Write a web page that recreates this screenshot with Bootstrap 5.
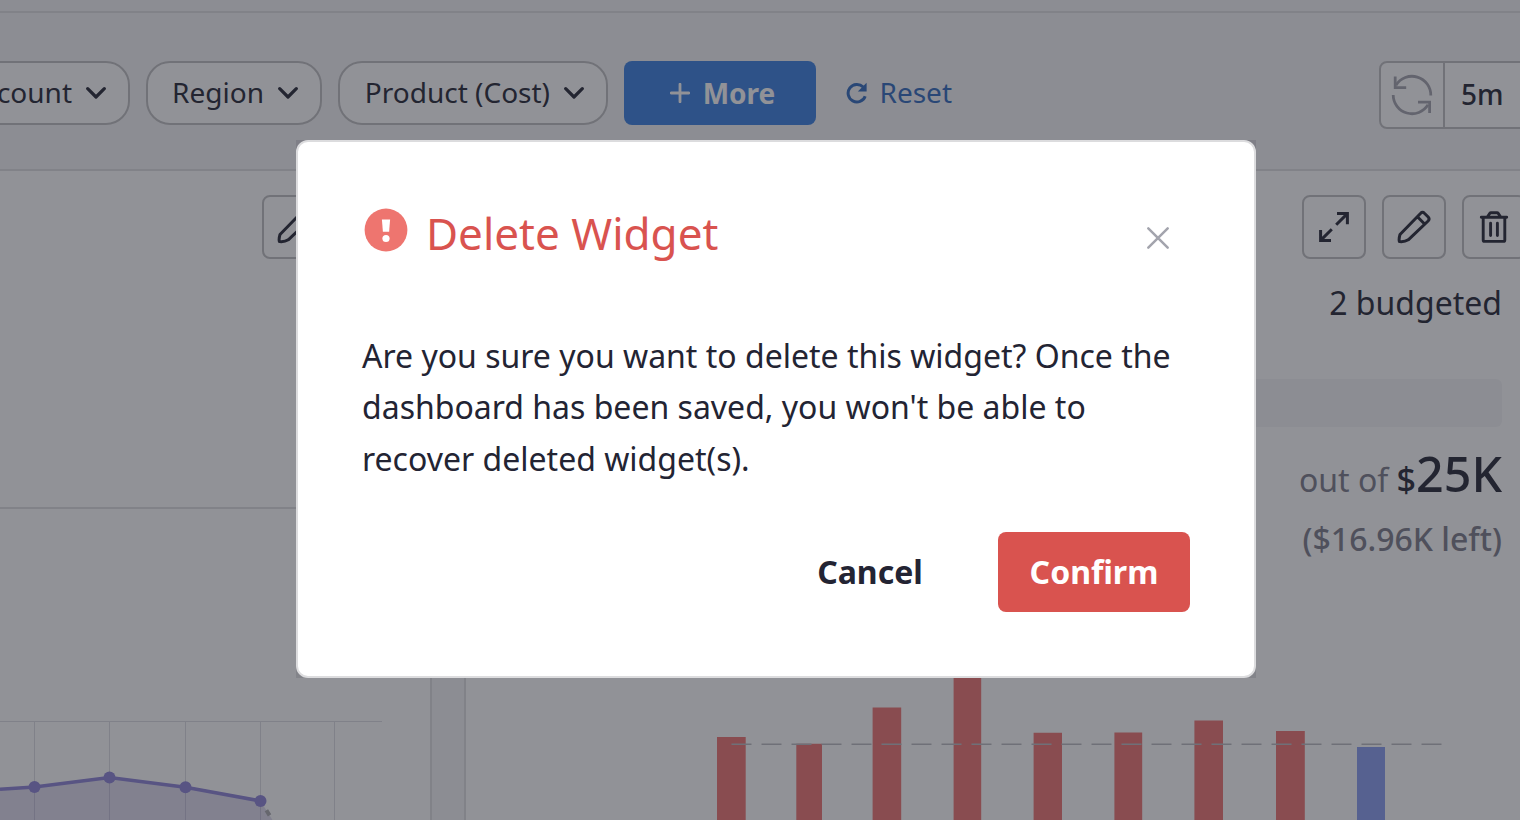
<!DOCTYPE html>
<html lang="en">
<head>
<meta charset="utf-8">
<meta name="viewport" content="width=device-width, initial-scale=1">
<title>Delete Widget</title>
<link href="https://cdn.jsdelivr.net/npm/bootstrap@5.3.0/dist/css/bootstrap.min.css" rel="stylesheet">
<style>
  :root { --ink: #232433; --rule: #dfdfe0; --edge: #bfbfc1; --tint: #f5f5f6; }
  body { font-family: "Noto Sans", sans-serif; color: var(--ink); background: #fff; }
  svg { display: block; flex: none; fill: none; stroke: currentColor; }
  .page { width: 1520px; height: 820px; }
  .topstrip { flex: none; height: 13px; background: var(--tint); border-bottom: 2px solid var(--rule); }
  .toolbar { flex: none; height: 158px; padding-top: 48px; background: var(--tint); border-bottom: 2px solid var(--rule); }
  .pill { height: 64px; border: 2px solid var(--edge); border-radius: 24px; background: #fff; font-size: 28px; color: var(--ink); padding: 0 22px 2px 24px; gap: 14px; }
  .pill svg { margin-top: 2px; }
  .pill-first { width: 190px; margin-left: -60px; }
  .pill-region { width: 176px; }
  .pill-product { width: 270px; }
  .btn-more { width: 192px; height: 64px; border-radius: 8px; background: #387fe0; color: #fff; font-size: 28px; font-weight: 700; gap: 13px; border: 0; padding: 0 0 0 5px; }
  .btn-reset { color: #2f69bc; font-size: 28px; gap: 13px; height: 64px; padding: 0 0 2px; margin-left: 12.5px; border: 0; }
  .btn-reset svg { margin-top: 2px; }
  .refresh { width: 160px; height: 68px; margin-right: -19px; border: 2px solid var(--edge); border-radius: 8px; background: #fff; font-size: 28px; font-weight: 500; }
  .refresh-icon { width: 64px; border-right: 2px solid var(--edge); color: #a3a3ad; padding-left: 9px; }
  .interval { padding: 0 0 2px 16px; }
  .panel-left { width: 432px; border-right: 2px solid var(--rule); }
  .gutter { width: 34px; background: var(--tint); border-right: 2px solid var(--rule); }
  .panel-right { width: 1054px; }
  .tools { padding-top: 24px; }
  .tool { width: 64px; height: 64px; border: 2px solid var(--edge); border-radius: 8px; padding: 0; color: var(--ink); }
  .panel-left .tools { padding-right: 104px; }
  .panel-right .tools { margin-right: -6px; }
  .left-top { border-bottom: 2px solid var(--rule); height: 338px; }
  .budget { padding-right: 18px; }
  .budgeted { font-size: 32px; line-height: 44px; margin-top: 22px; }
  .meter { height: 48px; border-radius: 6px; background: var(--tint); margin-top: 54px; }
  .outof { font-size: 32px; line-height: 60px; margin-top: 16px; color: #7b7b88; }
  .outof b { font-weight: 500; color: var(--ink); }
  .outof .currency { font-size: 34px; }
  .outof .amount { font-size: 48.4px; }
  .leftover { font-size: 32px; font-weight: 500; line-height: 44px; margin-top: 7px; color: #7b7b88; }
  .shade { z-index: 10; background: rgba(35, 37, 48, .5); }
  .dialog-wrap { width: 960px; height: 538px; margin-top: 140px; margin-left: 296px; background: rgba(35, 36, 48, .12); }
  .dialog { border: 2px solid #dcdcde; border-radius: 12px; background: #fff; padding: 61px 64px 64px; }
  .dialog-title { font-size: 44px; font-weight: 400; line-height: 60px; color: #d9534f; margin: 0; }
  .dialog-mark { margin: 3px 15px 0 -1px; }
  .dialog-close { color: #a3a4ad; padding: 0; border: 0; margin: 19px 16px 0 0; }
  .dialog-text { font-size: 32px; line-height: 51.4px; color: var(--ink); margin: 67px 0 0; }
  .dialog-actions { margin-top: 47.3px; }
  .dialog-btn { height: 80px; border: 0; border-radius: 8px; font-size: 32px; font-weight: 700; }
  .btn-cancel { width: 160px; color: var(--ink); }
  .btn-confirm { width: 192px; background: #d9534f; color: #fff; }
</style>
</head>
<body>
<div class="page position-relative overflow-hidden d-flex flex-column">
  <div class="topstrip"></div>
  <header class="toolbar d-flex align-items-start justify-content-between">
    <div class="d-flex align-items-center gap-3">
      <button class="btn pill pill-first d-flex align-items-center justify-content-end">Account
        <svg width="20" height="12" stroke-width="3.2" stroke-linecap="round" stroke-linejoin="round"><path d="M1.7 1.7 10 10 18.3 1.7"/></svg></button>
      <button class="btn pill pill-region d-flex align-items-center justify-content-end">Region
        <svg width="20" height="12" stroke-width="3.2" stroke-linecap="round" stroke-linejoin="round"><path d="M1.7 1.7 10 10 18.3 1.7"/></svg></button>
      <button class="btn pill pill-product d-flex align-items-center justify-content-end text-nowrap">Product (Cost)
        <svg width="20" height="12" stroke-width="3.2" stroke-linecap="round" stroke-linejoin="round"><path d="M1.7 1.7 10 10 18.3 1.7"/></svg></button>
      <button class="btn btn-more d-flex align-items-center justify-content-center">
        <svg width="20" height="20" stroke-width="2.8" stroke-linecap="round"><path d="M10 1.2V18.8M1.2 10H18.8"/></svg>More</button>
      <button class="btn btn-reset d-flex align-items-center">
        <svg width="22" height="22" viewBox="0 0 22 22" stroke-width="3"><path d="M20.2 14.2A8.8 8.8 0 1 1 18.2 5"/><path d="M21.6 .8V9.6H12.8Z" fill="currentColor" stroke="none"/></svg>Reset</button>
    </div>
    <div class="refresh d-flex">
      <div class="refresh-icon d-flex align-items-center">
        <svg width="44" height="44" stroke-width="2.8"><path d="M6 12.2A18.8 18.8 0 0 1 40.8 22.5M3.2 22A18.8 18.8 0 0 0 38 31.8"/><path d="M5.2 3.5V14.6H16.2M28 29.2H39.6V40"/></svg>
      </div>
      <div class="interval d-flex align-items-center">5m</div>
    </div>
  </header>
  <main class="d-flex flex-grow-1">
    <section class="panel-left">
      <div class="left-top">
        <div class="tools d-flex justify-content-end">
          <button class="btn tool d-flex align-items-center justify-content-center"><svg width="36" height="36" stroke-width="3" stroke-linejoin="round"><path d="M4 25.5 24.7 4.2Q26.5 2.2 28.4 4.2L32.2 8Q34 10 32.1 12L12.3 30.8Q8.5 33.2 3.4 32.6 2.6 30 4 25.5ZM21.4 7.8 28.6 15"/></svg></button>
        </div>
      </div>
      <svg width="430" height="311" viewBox="0 509 430 311">
        <path d="M0 721.5H382M34.5 722V820M109.5 722V820M185.5 722V820M260.5 722V820M334.5 722V820" stroke="#dcdce2"/>
        <path d="M0 789.2 34.5 787 109.5 777.5 185.5 787.2 260.5 801 272.5 820H0Z" fill="#7464b4" fill-opacity=".22" stroke="none"/>
        <path d="M0 789.2 34.5 787 109.5 777.5 185.5 787.2 260.5 801" stroke="#8c82d6" stroke-width="3.6"/>
        <path d="M260.5 801 272.5 820" stroke="#a8a8ac" stroke-width="4" stroke-dasharray="6 6" stroke-dashoffset="-11"/>
        <g fill="#8c82d6" stroke="none"><circle cx="34.5" cy="787" r="6"/><circle cx="109.5" cy="777.5" r="6"/><circle cx="185.5" cy="787.2" r="6"/><circle cx="260.5" cy="801" r="6"/></g>
      </svg>
    </section>
    <div class="gutter"></div>
    <section class="panel-right d-flex flex-column">
      <div class="tools d-flex justify-content-end gap-3">
        <button class="btn tool d-flex align-items-center justify-content-center"><svg width="32" height="32" stroke-width="3"><path d="M19 2.6H29.4V13.2M28.6 3.4 18.2 13.8M2.6 19V29.4H13M3.4 28.6 13.8 18.2"/></svg></button>
        <button class="btn tool d-flex align-items-center justify-content-center"><svg width="36" height="36" stroke-width="3" stroke-linejoin="round"><path d="M4 25.5 24.7 4.2Q26.5 2.2 28.4 4.2L32.2 8Q34 10 32.1 12L12.3 30.8Q8.5 33.2 3.4 32.6 2.6 30 4 25.5ZM21.4 7.8 28.6 15"/></svg></button>
        <button class="btn tool d-flex align-items-center justify-content-center"><svg width="32" height="32" stroke-width="2.9" stroke-linecap="round" stroke-linejoin="round"><path d="M3.3 6.3H28.7M9.3 6 11.8 2.4Q12.2 1.8 13 1.8H19Q19.8 1.8 20.2 2.4L22.7 6M5.2 6.3V29Q5.2 30.4 6.6 30.4H25.4Q26.8 30.4 26.8 29V6.3M12.6 12.2V24.6M19.4 12.2V24.6"/></svg></button>
      </div>
      <div class="budget text-end">
        <div class="budgeted">2 budgeted</div>
        <div class="meter"></div>
        <div class="outof">out of <b class="currency">$</b><b class="amount">25K</b></div>
        <div class="leftover">($16.96K left)</div>
      </div>
      <svg class="mt-auto" width="1054" height="258" viewBox="466 562 1054 258">
        <g fill="#ef7370" stroke="none">
          <path d="M717 737H745.7V820H717ZM796.3 743.8H822V820H796.3ZM872.6 707.4H901.2V820H872.6ZM953.6 660H981.2V820H953.6ZM1033.6 732.7H1062V820H1033.6ZM1114.4 732.5H1142.2V820H1114.4ZM1194.4 720.4H1223V820H1194.4ZM1276 731H1304.8V820H1276Z"/>
          <path d="M1357 747H1385V820H1357Z" fill="#899df0"/>
        </g>
        <path d="M731.5 744.3H1442" stroke="#babac0" stroke-width="1.4" stroke-dasharray="20 10"/>
      </svg>
    </section>
  </main>
  <div class="shade position-absolute top-0 start-0 w-100 h-100 d-flex align-items-start">
    <div class="dialog-wrap">
      <div class="dialog h-100" role="dialog">
        <div class="d-flex align-items-start justify-content-between">
          <div class="d-flex align-items-start">
            <svg class="dialog-mark" width="50" height="46" viewBox="361 206 50 46"><g stroke="none"><circle cx="386" cy="230" r="21.4" fill="#ee756f"/><path d="M381.9 219.5H390.1L389.1 231.8H382.9Z" fill="#fff"/><circle cx="386" cy="238.5" r="3.6" fill="#fff"/></g></svg>
            <h1 class="dialog-title">Delete Widget</h1>
          </div>
          <button class="btn dialog-close"><svg width="32" height="32" stroke-width="2.5" stroke-linecap="round"><path d="M6.3 6.3 25.7 25.7M25.7 6.3 6.3 25.7"/></svg></button>
        </div>
        <p class="dialog-text">Are you sure you want to delete this widget? Once the<br>dashboard has been saved, you won't be able to<br>recover deleted widget(s).</p>
        <div class="dialog-actions d-flex justify-content-end">
          <button class="btn dialog-btn btn-cancel me-5">Cancel</button>
          <button class="btn dialog-btn btn-confirm">Confirm</button>
        </div>
      </div>
    </div>
  </div>
</div>
<script src="https://cdn.jsdelivr.net/npm/bootstrap@5.3.0/dist/js/bootstrap.bundle.min.js"></script>
</body>
</html>
